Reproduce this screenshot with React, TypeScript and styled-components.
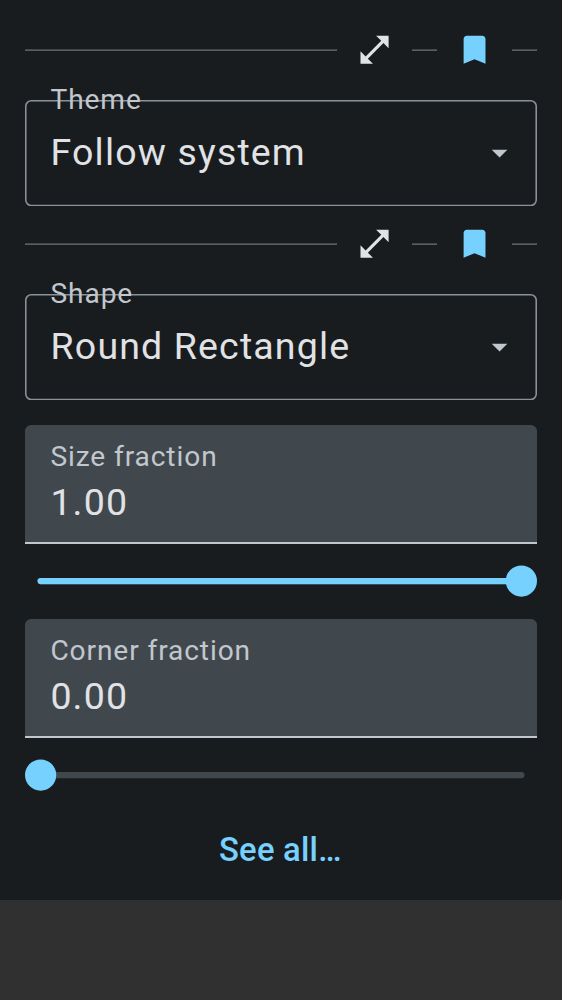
import React from "react";
import styled, { createGlobalStyle } from "styled-components";

const GlobalStyle = createGlobalStyle`
  * { box-sizing: border-box; }
  body { margin: 0; background: #303030; font-family: Roboto, sans-serif; }
`;

const Panel = styled.main`
  width: 562px;
  height: 900px;
  padding: 12.5px 25px 0;
  background: #191c1e;
  display: flex;
  flex-direction: column;
`;

const Toolbar = styled.div`
  height: 75px;
  flex: none;
  display: flex;
  align-items: center;
`;

const Rule = styled.span<{ $grow?: boolean }>`
  height: 2px;
  flex: ${(p) => (p.$grow ? "1" : "0 0 25px")};
  background: linear-gradient(#43474a 50%, #5a5e60 50%);
`;

const IconButton = styled.button`
  width: 75px;
  height: 75px;
  padding: 0;
  border: 0;
  background: none;
  display: grid;
  place-items: center;
`;

const Icon = styled.svg<{ $color: string }>`
  width: 37.5px;
  height: 37.5px;
  display: block;
  fill: ${(p) => p.$color};
  transform: translateX(-0.2px);
`;

const SelectField = styled.div`
  position: relative;
  flex: none;
  height: 106.25px;
  margin: 12.5px 0 0;
  padding: 0 18.75px 0 25.6px;
  display: flex;
  align-items: center;
  justify-content: space-between;
`;

const Outline = styled.svg`
  position: absolute;
  inset: 0;
  width: 100%;
  height: 100%;
`;

const Label = styled.span`
  font-size: 28.125px;
  line-height: 37.5px;
  letter-spacing: 0.9px;
  color: #c1c7ce;
`;

const FloatingLabel = styled(Label)`
  position: absolute;
  left: 25.5px;
  top: -19.2px;
`;

const Value = styled.span`
  font-size: 37.5px;
  line-height: 56.25px;
  letter-spacing: 1.15px;
  color: #e1e2e5;
`;

const SelectValue = styled(Value)`
  margin-bottom: 1.8px;
`;

const FilledValue = styled(Value)`
  margin-top: -1.7px;
`;

const FilledField = styled.div<{ $first?: boolean }>`
  flex: none;
  height: 118.75px;
  margin-top: ${(p) => (p.$first ? "25px" : "0")};
  padding: 13.2px 25.4px 0;
  border-radius: 6.25px 6.25px 0 0;
  border-bottom: 2px solid #c1c7ce;
  background: #41484d;
  display: flex;
  flex-direction: column;
`;

const SliderRow = styled.div`
  flex: none;
  height: 75px;
  display: flex;
  align-items: center;
`;

const Drawing = styled.svg`
  width: 100%;
  height: 32px;
  display: block;
`;

const SeeAll = styled.button`
  height: 75px;
  padding: 0 1.4px 0 0;
  border: 0;
  background: none;
  font: 500 32.8px/75px Roboto, sans-serif;
  letter-spacing: 0.23px;
  color: #76d1ff;
`;

function SettingToolbar() {
  return (
    <Toolbar>
      <Rule $grow />
      <IconButton aria-label="Expand">
        <Icon $color="#e1e2e5" viewBox="0 0 24 24">
          <path d="M21 11V3h-8l3.29 3.29-10 10L3 13v8h8l-3.29-3.29 10-10z" />
        </Icon>
      </IconButton>
      <Rule />
      <IconButton aria-label="Bookmark">
        <Icon $color="#76d1ff" viewBox="0 0 24 24">
          <path d="M17 3H7c-1.1 0-1.99.9-1.99 2L5 21l7-3 7 3V5c0-1.1-.9-2-2-2z" />
        </Icon>
      </IconButton>
      <Rule />
    </Toolbar>
  );
}

function Select({ label, value }: { label: string; value: string }) {
  return (
    <SelectField>
      <Outline viewBox="0 0 512 106.25">
        <rect x="0.78" y="0.78" width="510.44" height="104.69" rx="5.5" fill="none" stroke="#8b9198" strokeWidth="1.56" />
      </Outline>
      <FloatingLabel>{label}</FloatingLabel>
      <SelectValue>{value}</SelectValue>
      <Icon $color="#c1c7ce" viewBox="0 0 24 24">
        <path d="M7 10l5 5 5-5z" />
      </Icon>
    </SelectField>
  );
}

function Slider({ fraction }: { fraction: number }) {
  const thumb = 15.625 + fraction * 480.75;
  return (
    <SliderRow>
      <Drawing viewBox="0 0 512 32">
        <path d="M15.6 16H496.4" stroke="#41484d" strokeWidth="6.25" strokeLinecap="round" />
        {fraction > 0 && (
          <path d={`M15.6 16H${thumb}`} stroke="#76d1ff" strokeWidth="6.25" strokeLinecap="round" />
        )}
        <circle cx={thumb} cy="16" r="15.625" fill="#76d1ff" />
      </Drawing>
    </SliderRow>
  );
}

export default function App() {
  return (
    <>
      <GlobalStyle />
      <Panel>
        <SettingToolbar />
        <Select label="Theme" value="Follow system" />
        <SettingToolbar />
        <Select label="Shape" value="Round Rectangle" />
        <FilledField $first>
          <Label>Size fraction</Label>
          <FilledValue>1.00</FilledValue>
        </FilledField>
        <Slider fraction={1} />
        <FilledField>
          <Label>Corner fraction</Label>
          <FilledValue>0.00</FilledValue>
        </FilledField>
        <Slider fraction={0} />
        <SeeAll>See all…</SeeAll>
      </Panel>
    </>
  );
}
